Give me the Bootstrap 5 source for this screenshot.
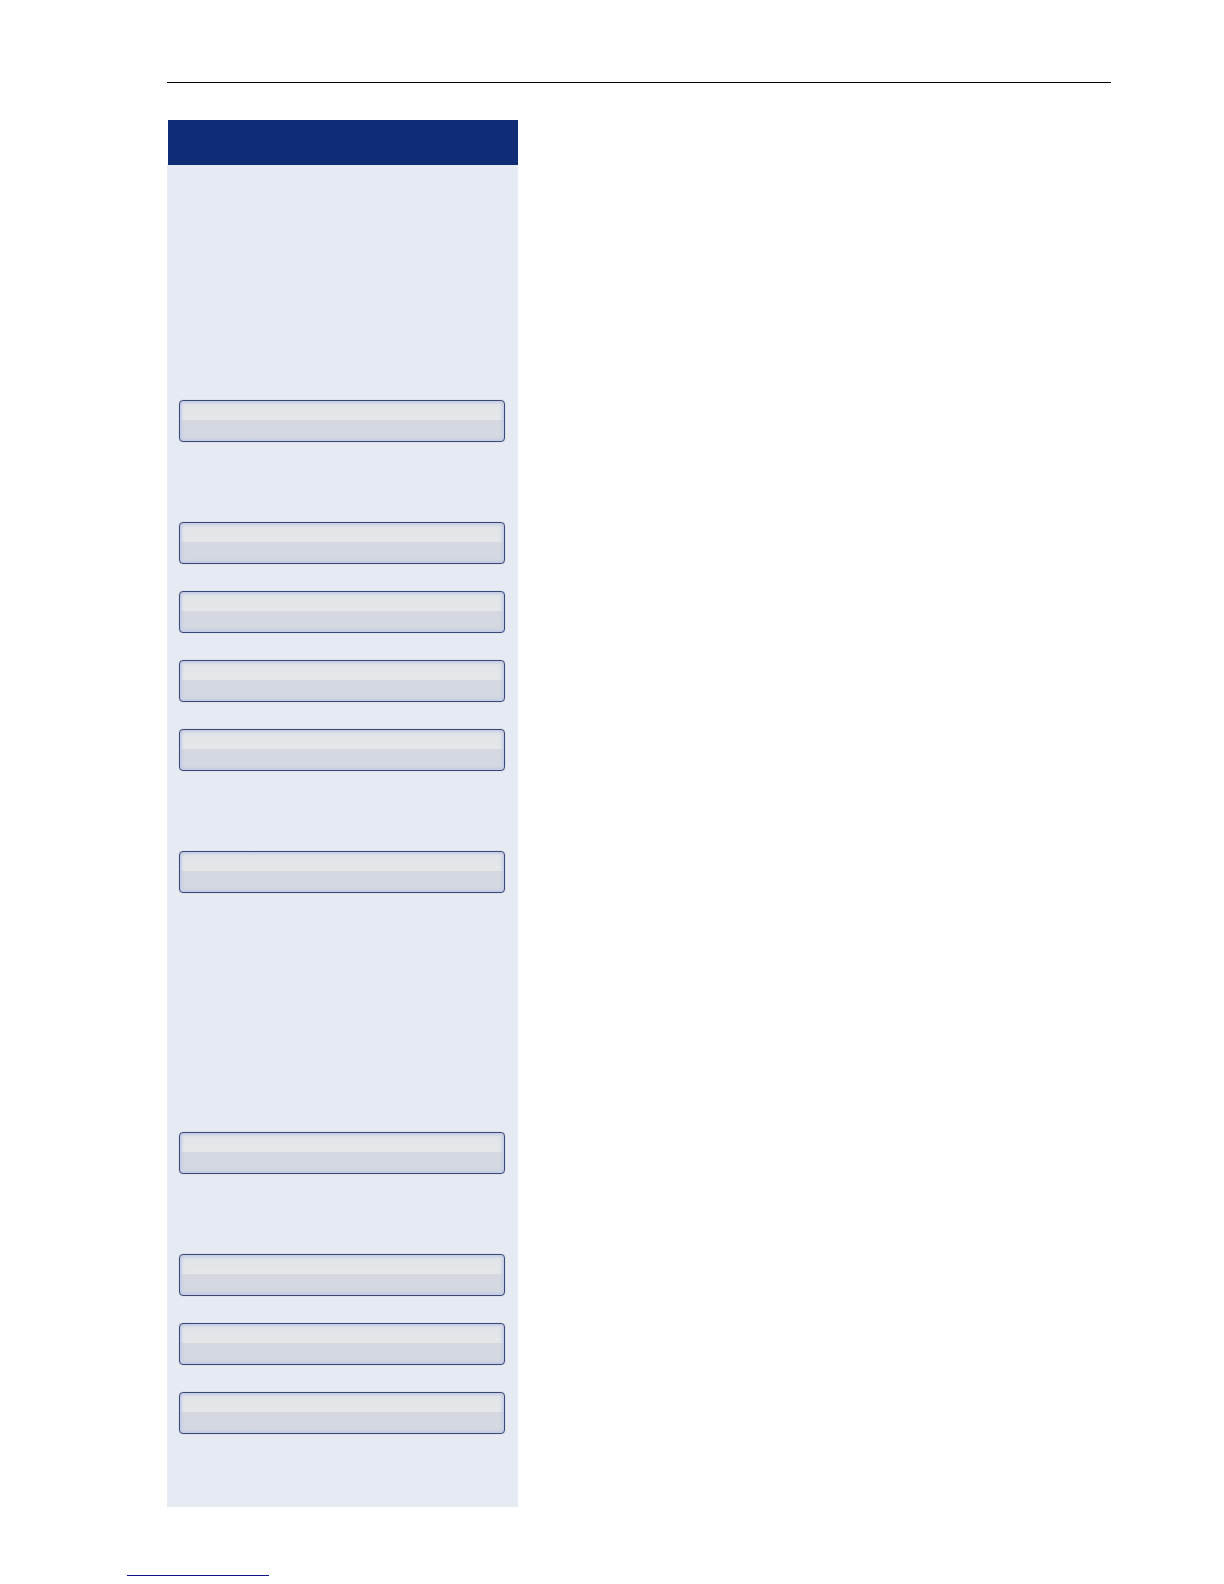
<!DOCTYPE html>
<html lang="en">
<head>
<meta charset="utf-8">
<meta name="viewport" content="width=device-width, initial-scale=1">
<title>Step by step</title>
<link href="https://cdn.jsdelivr.net/npm/bootstrap@5.3.0/dist/css/bootstrap.min.css" rel="stylesheet">
<style>
  body { font-family: "Liberation Sans", Arial, sans-serif; background: #fff; }
  .manual-page { padding: 82px 113px 0 167px; }
  .top-rule { border-top: 1px solid #000; }
  .steps-panel { flex: 0 1 351px; margin-top: 37px; }
  .steps-head { height: 45px; margin-left: 1px; background: #0f2d77; }
  .steps-body { padding: 235px 13px 73px 12px; background: #e6eaf2; }
  .step-group { gap: 27px; }
  .gap-near { margin-top: 80px; }
  .gap-far { margin-top: 239px; }
  .step-key {
    height: 42px;
    padding: 0;
    border: 1px solid #3a4775;
    border-radius: 4px;
    background: linear-gradient(#e1e4e8 0, #e5e7e9 48%, #d5d8e0 48%, #d4d8e0 100%);
    box-shadow: inset 0 0 3px 2px #c2cbe6, 0 0 1px #8f98b8;
  }
  .step-key:hover { border-color: #0f2d77; }
  .foot { padding: 0 127px 8px; margin-top: 67px; }
  .foot-link { width: 142px; height: 2px; border-bottom: 1px solid #10108c; }
</style>
</head>
<body>
<div class="manual-page">
  <header class="top-rule"></header>
  <div class="d-flex">
    <aside class="steps-panel">
      <div class="steps-head"></div>
      <div class="steps-body">
        <div class="step-group d-grid">
          <button type="button" class="btn step-key w-100"></button>
        </div>
        <div class="step-group gap-near d-grid">
          <button type="button" class="btn step-key w-100"></button>
          <button type="button" class="btn step-key w-100"></button>
          <button type="button" class="btn step-key w-100"></button>
          <button type="button" class="btn step-key w-100"></button>
        </div>
        <div class="step-group gap-near d-grid">
          <button type="button" class="btn step-key w-100"></button>
        </div>
        <div class="step-group gap-far d-grid">
          <button type="button" class="btn step-key w-100"></button>
        </div>
        <div class="step-group gap-near d-grid">
          <button type="button" class="btn step-key w-100"></button>
          <button type="button" class="btn step-key w-100"></button>
          <button type="button" class="btn step-key w-100"></button>
        </div>
      </div>
    </aside>
    <main class="flex-fill"></main>
  </div>
</div>
<footer class="foot"><a href="#" class="foot-link d-block"></a></footer>
<script src="https://cdn.jsdelivr.net/npm/bootstrap@5.3.0/dist/js/bootstrap.bundle.min.js"></script>
</body>
</html>
